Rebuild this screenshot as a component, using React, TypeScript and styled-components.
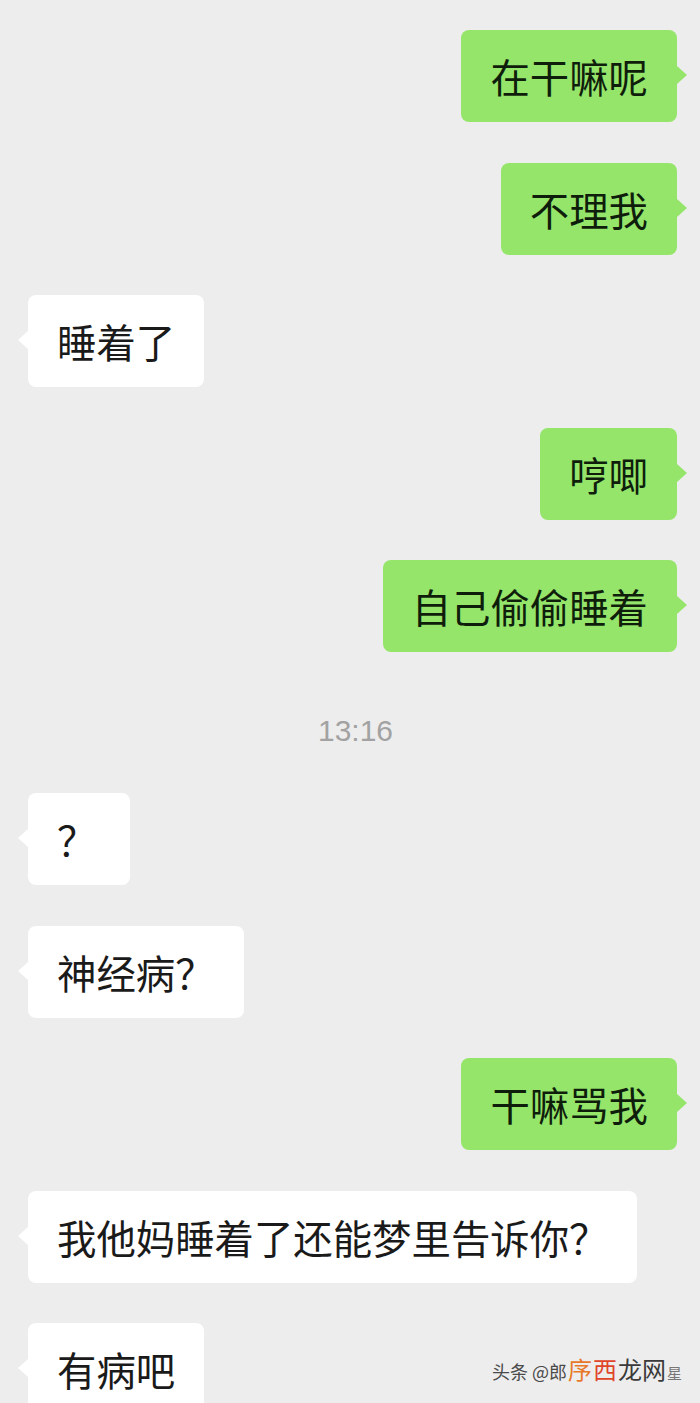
import React from 'react'
import styled, { createGlobalStyle } from 'styled-components'

const GlobalStyle = createGlobalStyle`
  html, body {
    margin: 0;
    padding: 0;
    background: #ededed;
  }
  body {
    font-family: "Noto Sans CJK SC", "Noto Sans", sans-serif;
  }
`

// Chat page: fixed screenshot-sized canvas
const Page = styled.div`
  position: relative;
  width: 700px;
  height: 1403px;
  overflow: hidden;
  background: #ededed;
`

const Thread = styled.div`
  display: flex;
  flex-direction: column;
  gap: 40.5px;
  padding: 30px 23px 0 28px;
`

const Row = styled.div<{ $mine?: boolean }>`
  display: flex;
  justify-content: ${(p) => (p.$mine ? 'flex-end' : 'flex-start')};
`

const Bubble = styled.div<{ $mine?: boolean }>`
  position: relative;
  box-sizing: border-box;
  height: 92px;
  min-width: 102px;
  display: flex;
  align-items: center;
  padding: 0 29px;
  border-radius: 8px;
  font-size: 39.4px;
  line-height: 1;
  white-space: nowrap;
  background: ${(p) => (p.$mine ? '#95e56b' : '#ffffff')};
  color: ${(p) => (p.$mine ? '#0f1e0b' : '#1a1a1a')};

  &::after {
    content: '';
    position: absolute;
    top: 36px;
    ${(p) => (p.$mine ? 'right: -10px;' : 'left: -10px;')}
    border-top: 9px solid transparent;
    border-bottom: 9px solid transparent;
    ${(p) =>
      p.$mine
        ? 'border-left: 10px solid #95e56b;'
        : 'border-right: 10px solid #ffffff;'}
  }
`

const TimeRow = styled.div`
  height: 60px;
  display: flex;
  justify-content: center;
  align-items: center;
  padding: 16px 0 0 6px;
  box-sizing: border-box;
  font-family: "Liberation Sans", Arial, sans-serif;
  font-size: 30px;
  color: #a2a2a2;
`

const Watermark = styled.div`
  position: absolute;
  right: 18px;
  bottom: 17px;
  display: flex;
  align-items: baseline;
  gap: 1px;
  font-size: 18px;
  color: #4a4a4a;
`

const Mark = styled.span<{ $color: string; $size?: number }>`
  font-size: ${(p) => p.$size ?? 24}px;
  color: ${(p) => p.$color};
`

interface Msg {
  text: string
  mine?: boolean
  time?: boolean
}

const messages: Msg[] = [
  { text: '在干嘛呢', mine: true },
  { text: '不理我', mine: true },
  { text: '睡着了' },
  { text: '哼唧', mine: true },
  { text: '自己偷偷睡着', mine: true },
  { text: '13:16', time: true },
  { text: '？' },
  { text: '神经病？' },
  { text: '干嘛骂我', mine: true },
  { text: '我他妈睡着了还能梦里告诉你？' },
  { text: '有病吧' },
]

const App = () => {
  return (
    <>
      <GlobalStyle />
      <Page>
        <Thread>
          {messages.map((m, i) =>
            m.time ? (
              <TimeRow key={i}>{m.text}</TimeRow>
            ) : (
              <Row key={i} $mine={m.mine}>
                <Bubble $mine={m.mine}>{m.text}</Bubble>
              </Row>
            )
          )}
        </Thread>
        <Watermark>
          <span>头条 @郎</span>
          <Mark $color="#e8782a">序</Mark>
          <Mark $color="#e0452a">西</Mark>
          <Mark $color="#3a3a3a">龙网</Mark>
          <Mark $color="#777" $size={15}>星</Mark>
        </Watermark>
      </Page>
    </>
  )
}

export default App
